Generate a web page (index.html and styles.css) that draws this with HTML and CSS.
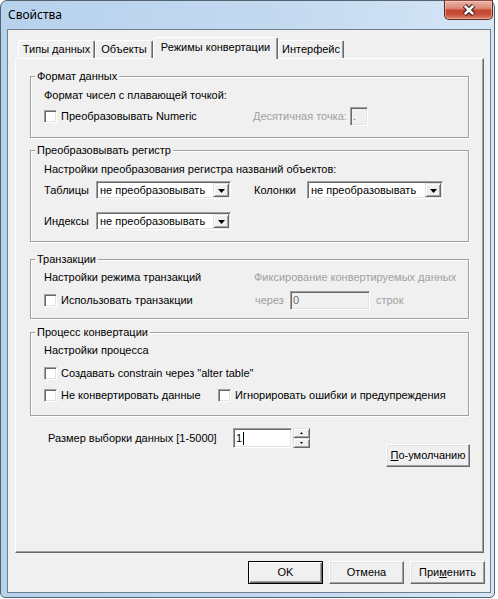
FILE: index.html
```html
<!DOCTYPE html>
<html lang="ru">
<head>
<meta charset="utf-8">
<title>Свойства</title>
<link rel="stylesheet" href="styles.css">
</head>
<body>
<div class="window">
  <div class="titlebar">
    <span class="title">Свойства</span>
    <div class="close">
      <svg width="16" height="12" viewBox="0 0 16 12">
        <path d="M3.5 1.5 L12.5 10.5 M12.5 1.5 L3.5 10.5" stroke="#3a1d17" stroke-width="4.6" fill="none"/>
        <path d="M3.8 1.8 L12.2 10.2 M12.2 1.8 L3.8 10.2" stroke="#ffffff" stroke-width="2.6" fill="none"/>
      </svg>
    </div>
  </div>
  <div class="client">
    <div class="tabs">
      <div class="tab t1">Типы данных</div>
      <div class="tab t2">Объекты</div>
      <div class="tab t3 active">Режимы конвертации</div>
      <div class="tab t4">Интерфейс</div>
    </div>
    <div class="panel">
      <fieldset class="group g1">
        <legend>Формат данных</legend>
        <div class="gbody">
          <div class="line l1">Формат чисел с плавающей точкой:</div>
          <div class="row1">
            <label class="check"><span class="box"></span>Преобразовывать Numeric</label>
            <span class="dis">Десятичная точка:</span>
            <span class="field disabled dot">.</span>
          </div>
        </div>
      </fieldset>

      <fieldset class="group g2">
        <legend>Преобразовывать регистр</legend>
        <div class="gbody">
          <div class="line l2">Настройки преобразования регистра названий объектов:</div>
          <div class="grid2">
            <span>Таблицы</span>
            <div class="combo"><span class="val">не преобразовывать</span><span class="arrow"><svg width="7" height="4" viewBox="0 0 7 4"><path d="M0 0 H7 L3.5 4 Z" fill="#000"/></svg></span></div>
            <span class="lab2">Колонки</span>
            <div class="combo"><span class="val">не преобразовывать</span><span class="arrow"><svg width="7" height="4" viewBox="0 0 7 4"><path d="M0 0 H7 L3.5 4 Z" fill="#000"/></svg></span></div>
            <span>Индексы</span>
            <div class="combo"><span class="val">не преобразовывать</span><span class="arrow"><svg width="7" height="4" viewBox="0 0 7 4"><path d="M0 0 H7 L3.5 4 Z" fill="#000"/></svg></span></div>
          </div>
        </div>
      </fieldset>

      <fieldset class="group g3">
        <legend>Транзакции</legend>
        <div class="gbody grid3">
          <span class="l3">Настройки режима транзакций</span>
          <span class="l3 dis">Фиксирование конвертируемых данных</span>
          <label class="check r3"><span class="box"></span>Использовать транзакции</label>
          <div class="through r3">
            <span class="dis">через</span>
            <span class="field disabled rows">0</span>
            <span class="dis">строк</span>
          </div>
        </div>
      </fieldset>

      <fieldset class="group g4">
        <legend>Процесс конвертации</legend>
        <div class="gbody">
          <div class="line l4">Настройки процесса</div>
          <label class="check c4a"><span class="box"></span>Создавать constrain через "alter table"</label>
          <div class="pair">
            <label class="check"><span class="box"></span>Не конвертировать данные</label>
            <label class="check"><span class="box"></span>Игнорировать ошибки и предупреждения</label>
          </div>
        </div>
      </fieldset>

      <div class="sizerow">
        <span class="sizelabel">Размер выборки данных [1-5000]</span>
        <span class="field num">1<span class="caret"></span></span>
        <div class="spin">
          <span class="sb"><svg width="3" height="2" viewBox="0 0 3 2"><path d="M1.5 0 L3 2 H0 Z" fill="#000"/></svg></span>
          <span class="sb"><svg width="3" height="2" viewBox="0 0 3 2"><path d="M0 0 H3 L1.5 2 Z" fill="#000"/></svg></span>
        </div>
        <div class="btn defbtn"><span><u>П</u>о-умолчанию</span></div>
      </div>
    </div>
    <div class="buttons">
      <div class="btn default">OK</div>
      <div class="btn">Отмена</div>
      <div class="btn">При<u>м</u>енить</div>
    </div>
  </div>
</div>
</body>
</html>
```
FILE: styles.css
```css
* { box-sizing: border-box; }
html, body { margin: 0; padding: 0; background: #fff; }
body {
  font: 11px/13px "Liberation Sans", Arial, sans-serif;
  color: #000;
}

.window {
  width: 495px;
  height: 598px;
  border: 1px solid #55626f;
  border-radius: 7px 7px 5px 5px;
  background: linear-gradient(90deg, #b7d2ed 0%, #c3d9f0 55%, #d5e6f6 100%);
  padding: 0 3px 4px 6px;
  display: flex;
  flex-direction: column;
}

.titlebar {
  height: 28px;
  display: flex;
  align-items: flex-start;
}
.title {
  font: 12px/16px "Noto Sans", "Open Sans", sans-serif;
  margin: 6px 0 0 1px;
}
.close {
  margin: -1px -2px 0 auto;
  width: 49px;
  height: 20px;
  border: 1px solid #5b2a20;
  border-top-color: #8a4a3e;
  border-radius: 0 0 5px 5px;
  background: linear-gradient(180deg, #eab2a4 0%, #dc8a77 40%, #c6472f 52%, #c9503a 75%, #de8466 100%);
  box-shadow: inset 0 0 0 1px rgba(255, 220, 210, 0.45);
  display: flex;
  align-items: center;
  justify-content: center;
}

.client {
  flex: 1;
  border: 1px solid #6e7f92;
  background: #f0f0f0;
  padding: 7px 6px 0 7px;
  display: flex;
  flex-direction: column;
}

.tabs {
  height: 21px;
  display: flex;
  align-items: flex-end;
  padding-left: 3px;
}
.tab {
  height: 18px;
  border: 1px solid;
  border-bottom: none;
  border-color: #fff #696969 transparent #fff;
  border-radius: 2px 2px 0 0;
  box-shadow: inset -1px 0 0 #a0a0a0;
  background: #f0f0f0;
  text-align: center;
  line-height: 16px;
  white-space: nowrap;
}
.t1 { width: 77px; }
.t2 { width: 58px; }
.t3 { width: 125px; }
.t4 { width: 66px; }
.tab.active {
  height: 22px;
  margin-bottom: -1px;
  line-height: 18px;
  position: relative;
  z-index: 2;
}

.panel {
  flex: none;
  height: 495px;
  border: 1px solid;
  border-color: #fff #696969 #696969 #fff;
  box-shadow: inset -1px -1px 0 #a0a0a0;
  padding: 0 13px 0 14px;
}

.group {
  border: 1px solid #a0a0a0;
  box-shadow: inset 1px 1px 0 #fff, 1px 1px 0 #fff;
  margin: 0;
  padding: 0;
  min-width: 0;
  width: 439px;
}
.group legend {
  margin-left: 4px;
  padding: 0 2px;
  line-height: 13px;
  background: #f0f0f0;
}
.g1 { margin-top: 11px; height: 68px; }
.g2 { margin-top: 6px; height: 98px; }
.g3 { margin-top: 11px; height: 66px; }
.g4 { margin-top: 7px; height: 90px; }

.gbody { padding-left: 13px; }
.line { height: 13px; white-space: nowrap; }
.l1 { margin-top: 6px; }
.l2 { margin-top: 6px; }
.l4 { margin-top: 5px; }

.dis { color: #a0a0a0; white-space: nowrap; }

.check {
  display: flex;
  align-items: center;
  white-space: nowrap;
}
.box {
  flex: none;
  width: 13px;
  height: 13px;
  margin-right: 4px;
  border: 1px solid;
  border-color: #a0a0a0 #fff #fff #a0a0a0;
  box-shadow: inset 1px 1px 0 #696969, inset -1px -1px 0 #e3e3e3;
  background: #fff;
}

.field {
  display: flex;
  align-items: center;
  border: 1px solid;
  border-color: #a0a0a0 #fff #fff #a0a0a0;
  box-shadow: inset 1px 1px 0 #696969, inset -1px -1px 0 #e3e3e3;
  background: #fff;
  padding: 0 2px;
}
.field.disabled { background: #f0f0f0; color: #6d6d6d; }

.row1 {
  margin-top: 4px;
  height: 20px;
  display: grid;
  grid-template-columns: 209px auto auto;
  align-items: center;
  justify-content: start;
}
.dot { width: 18px; height: 19px; margin-left: 3px; }

.grid2 {
  margin-top: 5px;
  display: grid;
  grid-template-columns: 52px 135px 76px 136px;
  grid-auto-rows: 18px;
  row-gap: 13px;
  align-items: center;
}
.lab2 { padding-left: 23px; }
.combo {
  height: 18px;
  display: flex;
  align-items: center;
  border: 1px solid;
  border-color: #a0a0a0 #fff #fff #a0a0a0;
  box-shadow: inset 1px 1px 0 #696969, inset -1px -1px 0 #e3e3e3;
  background: #fff;
  padding: 1px 1px 1px 3px;
}
.combo .val { flex: 1; white-space: nowrap; }
.arrow {
  flex: none;
  width: 16px;
  height: 14px;
  border: 1px solid;
  border-color: #e3e3e3 #696969 #696969 #e3e3e3;
  box-shadow: inset 1px 1px 0 #fff, inset -1px -1px 0 #a0a0a0;
  background: #f0f0f0;
  display: flex;
  align-items: center;
  justify-content: center;
}
.arrow svg { display: block; margin-top: 1px; }

.grid3 {
  display: grid;
  grid-template-columns: 210px auto;
  align-items: center;
  padding-top: 5px;
}
.l3 { height: 13px; white-space: nowrap; }
.r3 { margin-top: 7px; height: 19px; }
.through {
  display: flex;
  align-items: center;
  padding-left: 1px;
}
.rows { width: 80px; height: 19px; margin: 0 6px; }

.c4a { margin-top: 10px; height: 13px; }
.pair {
  margin-top: 9px;
  height: 13px;
  display: grid;
  grid-template-columns: 174px auto;
}

.sizerow {
  margin-top: 12px;
  padding-left: 18px;
  display: flex;
  align-items: flex-start;
  height: 40px;
}
.sizelabel { width: 185px; line-height: 20px; white-space: nowrap; }
.num { width: 59px; height: 20px; }
.caret { display: inline-block; width: 1px; height: 13px; background: #000; margin-left: 1px; }
.spin { display: flex; flex-direction: column; margin-left: 1px; }
.sb {
  width: 17px;
  height: 10px;
  border: 1px solid;
  border-color: #e3e3e3 #696969 #696969 #e3e3e3;
  box-shadow: inset 1px 1px 0 #fff, inset -1px -1px 0 #a0a0a0;
  background: #f0f0f0;
  display: flex;
  align-items: center;
  justify-content: center;
}
.sb svg { display: block; }

.btn {
  width: 75px;
  height: 23px;
  border: 1px solid;
  border-color: #fff #696969 #696969 #fff;
  box-shadow: inset -1px -1px 0 #a0a0a0, inset 1px 1px 0 #e3e3e3;
  background: #f0f0f0;
  display: flex;
  align-items: center;
  justify-content: center;
  white-space: nowrap;
}
.btn.default {
  border: 1px solid #000;
  box-shadow: inset 1px 1px 0 #fff, inset -1px -1px 0 #696969, inset -2px -2px 0 #a0a0a0;
}
.defbtn {
  width: 84px;
  margin: 16px 0 0 auto;
}

.buttons {
  margin: 8px -1px 0 0;
  height: 23px;
  display: flex;
  justify-content: flex-end;
  gap: 6px;
}
```
